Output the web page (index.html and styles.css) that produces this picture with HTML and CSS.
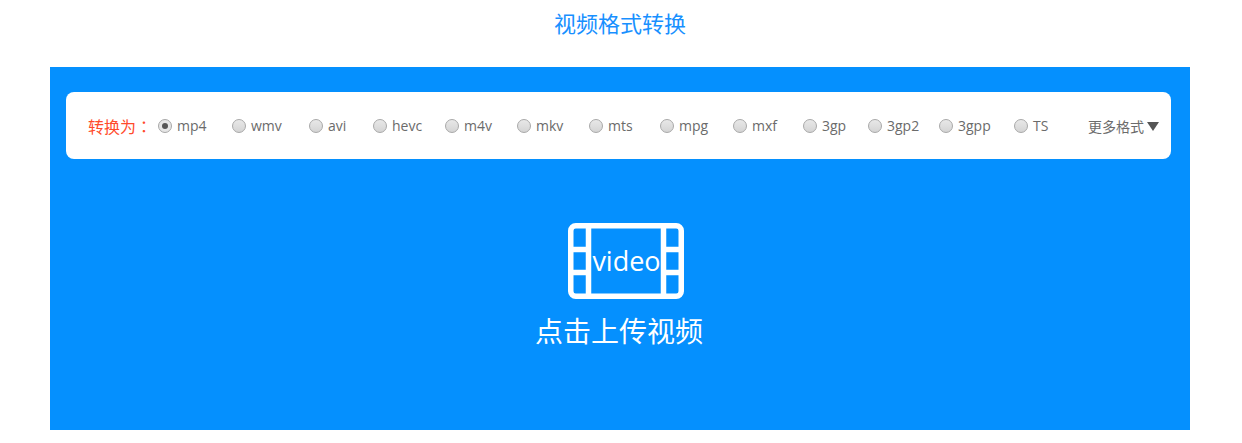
FILE: index.html
```html
<!DOCTYPE html>
<html lang="zh-CN">
  <head>
    <meta charset="UTF-8" />
    <title>视频格式转换</title>
    <link rel="stylesheet" href="styles.css">
  </head>
  <body>
    <h1 class="title">视频格式转换</h1>

    <div class="converter">
      <!-- Format options -->
      <div class="format-bar">
        <span class="format-label">转换为<span class="format-colon" lang="zh-TW">：</span></span>
        <div class="format-list">
          <label class="format-item"><span class="radio checked"></span>mp4</label>
          <label class="format-item"><span class="radio"></span>wmv</label>
          <label class="format-item"><span class="radio"></span>avi</label>
          <label class="format-item"><span class="radio"></span>hevc</label>
          <label class="format-item"><span class="radio"></span>m4v</label>
          <label class="format-item"><span class="radio"></span>mkv</label>
          <label class="format-item"><span class="radio"></span>mts</label>
          <label class="format-item"><span class="radio"></span>mpg</label>
          <label class="format-item"><span class="radio"></span>mxf</label>
          <label class="format-item"><span class="radio"></span>3gp</label>
          <label class="format-item"><span class="radio"></span>3gp2</label>
          <label class="format-item"><span class="radio"></span>3gpp</label>
          <label class="format-item"><span class="radio"></span>TS</label>
        </div>
        <a class="more-formats" href="#">更多格式<span class="more-arrow"></span></a>
      </div>

      <!-- Upload area -->
      <div class="upload">
        <div class="film-icon">
          <svg width="116" height="76" viewBox="0 0 116 76" fill="none" stroke="#fff" stroke-width="5.5">
            <rect x="2.75" y="2.75" width="110.5" height="70.5" rx="5" />
            <path d="M20.5 3V73M95.5 3V73M3 26.5H20M3 49.5H20M96 26.5H113M96 49.5H113" />
          </svg>
          <span class="film-text">video</span>
        </div>
        <div class="upload-text">点击上传视频</div>
      </div>
    </div>
  </body>
</html>
```

FILE: styles.css
```css
/* Global Reset */
* {
  margin: 0;
  padding: 0;
  box-sizing: border-box;
}

body {
  width: 1242px;
  height: 443px;
  background-color: #fff;
  font-family: "Open Sans", "Noto Sans CJK SC", sans-serif;
  overflow: hidden;
}

.title {
  width: 1140px;
  height: 67px;
  margin-left: 50px;
  padding-top: 7px;
  font-size: 22px;
  font-weight: 400;
  line-height: 33px;
  text-align: center;
  color: #1890ff;
}

/* Blue panel */
.converter {
  width: 1140px;
  height: 363px;
  margin-left: 50px;
  padding: 25px 19px 0 16px;
  background-color: #0590fe;
}

/* Format bar */
.format-bar {
  display: flex;
  align-items: center;
  height: 67px;
  padding: 0 12px 0 22px;
  background-color: #fff;
  border-radius: 8px;
}

.format-label {
  width: 70px;
  font-size: 16px;
  color: #ff4b2b;
}

.format-colon {
  font-family: "Noto Sans CJK TC", sans-serif;
}

.format-list {
  display: grid;
  grid-template-columns: 74px 77px 64px 72px 72px 72px 71px 73px 70px 65px 71px 75px 74px;
}

.format-item {
  display: flex;
  align-items: center;
  gap: 5px;
  font-size: 14px;
  line-height: 20px;
  color: #6b6b6b;
}

.radio {
  position: relative;
  width: 14px;
  height: 14px;
  border: 1px solid #a8a8a8;
  border-radius: 50%;
  background: linear-gradient(#e8e8e8, #d4d4d4);
}

.radio.checked {
  background: #e6e6e6;
}

.radio.checked::after {
  content: "";
  position: absolute;
  top: 3px;
  left: 3px;
  width: 6px;
  height: 6px;
  border-radius: 50%;
  background-color: #555;
}

.more-formats {
  display: flex;
  align-items: center;
  margin: 1px 0 0 auto;
  font-size: 14px;
  color: #6b6b6b;
  text-decoration: none;
}

.more-arrow {
  width: 0;
  height: 0;
  margin-left: 3px;
  border-style: solid;
  border-width: 9px 6px 0;
  border-color: #555 transparent transparent;
}

/* Upload area */
.upload {
  display: flex;
  flex-direction: column;
  align-items: center;
  padding-top: 64px;
  color: #fff;
}

.film-icon {
  position: relative;
  width: 116px;
  height: 76px;
  margin-left: 14px;
}

.film-icon svg {
  display: block;
}

.film-text {
  position: absolute;
  top: 18px;
  left: 0;
  width: 100%;
  padding-left: 2px;
  font-size: 27px;
  line-height: 40px;
  text-align: center;
}

.upload-text {
  margin: 11px 0 0 1px;
  font-size: 28px;
  line-height: 42px;
}
```
